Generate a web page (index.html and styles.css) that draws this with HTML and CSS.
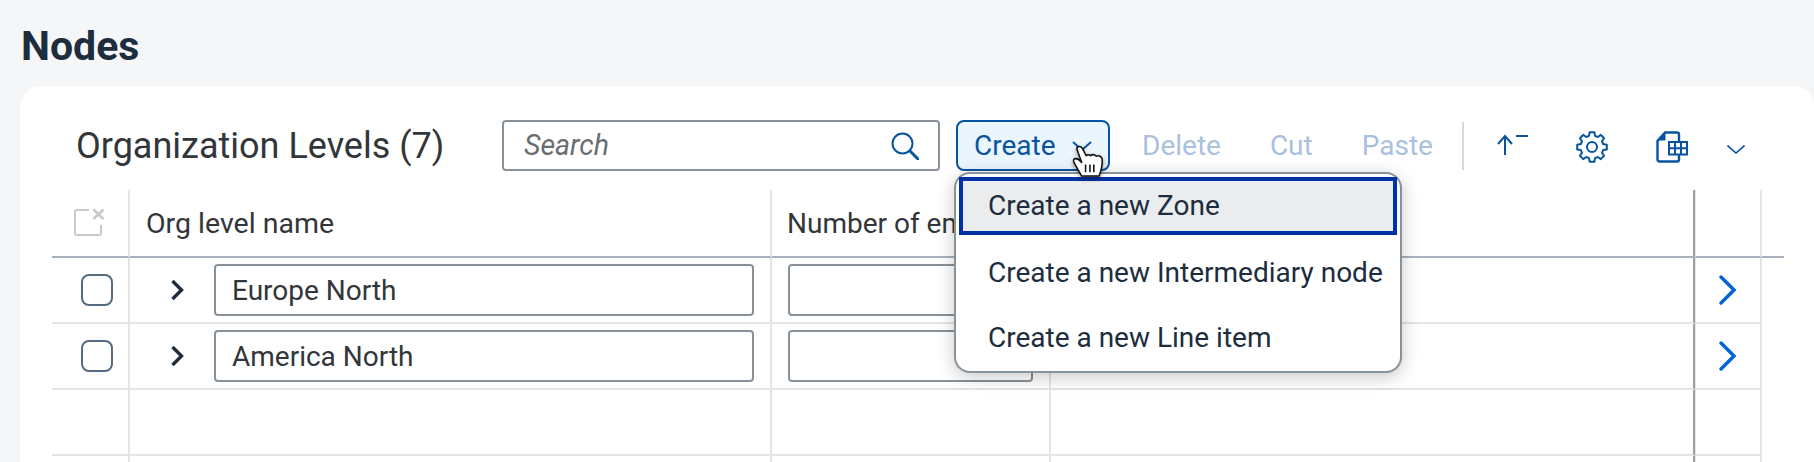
FILE: index.html
```html
<!DOCTYPE html>
<html lang="en">
<head>
    <meta charset="UTF-8">
    <meta name="viewport" content="width=device-width, initial-scale=1.0">
    <title>Nodes</title>
    <link rel="stylesheet" href="styles.css">
</head>
<body>
    <h1 class="page-title">Nodes</h1>
    <section class="card">
        <div class="toolbar">
            <h2 class="table-title">Organization Levels (7)</h2>
            <div class="search">
                <input type="text" class="search-input" placeholder="Search">
                <svg class="search-icon" width="28" height="28" viewBox="0 0 28 28" fill="none" stroke="#0854a0">
                    <circle cx="11.5" cy="11.5" r="10" stroke-width="2"/>
                    <path d="M19 19l8 8" stroke-width="3" stroke-linecap="round"/>
                </svg>
            </div>
            <div class="create-wrap">
                <button class="btn-create">
                    <span>Create</span>
                    <svg width="20" height="10" viewBox="0 0 20 10" fill="none" stroke="#0854a0" stroke-width="2"><path d="M1 1l9 8 9-8"/></svg>
                </button>
                <div class="menu">
                    <div class="menu-item menu-item-focus">Create a new Zone</div>
                    <div class="menu-item">Create a new Intermediary node</div>
                    <div class="menu-item">Create a new Line item</div>
                </div>
                <svg class="hand" width="32" height="34" viewBox="-1 -1 33 35">
                    <path d="M9 31L1 17Q-.5 13 3 13Q6 13 9 17L4 3Q4 .5 6.5 .5Q9 .5 10 3L13.5 10Q16 8 18 10Q21 7.5 24 10.5Q28 9 30 13Q31 20 27 31Z" fill="#fff" stroke="#111" stroke-width="1.6" stroke-linejoin="round"/>
                    <path d="M13 19v8M17.5 19v8M21.5 19v8" stroke="#111" stroke-width="1.6"/>
                </svg>
            </div>
            <button class="btn-flat">Delete</button>
            <button class="btn-flat">Cut</button>
            <button class="btn-flat">Paste</button>
            <span class="separator"></span>
            <svg class="icon-sort" width="32" height="24" viewBox="0 0 32 24" fill="none" stroke="#0854a0" stroke-width="2"><path d="M8 21V2M1 10l7-8 7 8M19 2h12"/></svg>
            <svg class="icon-gear" width="32" height="32" viewBox="0 0 32 32" fill="none" stroke="#0854a0" stroke-width="2" stroke-linejoin="round">
                <path d="M13 4.9L13.7 1.2H18.4L19 4.9L21.8 6L24.8 3.9L28.1 7.2L26 10.3L27.1 13L30.8 13.7V18.4L27.1 19L26 21.8L28.1 24.8L24.8 28.1L21.8 26L19 27.1L18.4 30.8H13.7L13 27.1L10.3 26L7.2 28.1L3.9 24.8L6 21.8L4.9 19L1.2 18.4V13.7L4.9 13L6 10.3L3.9 7.2L7.2 3.9L10.3 6Z"/>
                <circle cx="16" cy="16" r="5"/>
            </svg>
            <svg class="icon-table" width="32" height="32" viewBox="0 0 32 32" fill="none" stroke="#0854a0" stroke-width="2.4">
                <path d="M1.500 28.500V10L9 1.500H21Q23 1.500 23 3.500V10M23 24V28.500Q23 30.500 21 30.500H3.500Q1.500 30.500 1.500 28.500"/>
                <path d="M2 9L9 2V9Z" fill="#0854a0" stroke-width="1"/>
                <path d="M13 11H31V23.500H13ZM13 17.200H31M19 11V23.500M25 11V23.500" stroke-width="2"/>
            </svg>
            <svg class="icon-more" width="18" height="9" viewBox="0 0 18 9" fill="none" stroke="#0854a0" stroke-width="1.6"><path d="M.5 .5L9 8l8.500-7.500"/></svg>
        </div>

        <table class="levels">
            <colgroup>
                <col class="col-select">
                <col class="col-name">
                <col class="col-number">
                <col class="col-fill">
                <col class="col-nav">
                <col class="col-end">
            </colgroup>
            <thead>
                <tr>
                    <th class="cell-select">
                        <svg width="32" height="28" viewBox="0 0 32 28" fill="none" stroke="#c6cacd" stroke-width="2">
                            <path d="M15 2H3Q1 2 1 4V25Q1 27 3 27H25Q27 27 27 25V17"/>
                            <path d="M19.500 1.500l10 9.500M29.500 1.500l-10 9.500" stroke-width="2.600"/>
                        </svg>
                    </th>
                    <th class="cell-name">Org level name</th>
                    <th>Number of employees</th>
                    <th class="cell-fill"></th>
                    <th class="cell-nav"></th>
                    <th class="cell-end"></th>
                </tr>
            </thead>
            <tbody>
                <tr>
                    <td class="cell-select"><span class="checkbox"></span></td>
                    <td>
                        <div class="name-cell">
                            <svg width="14" height="22" viewBox="0 0 14 22" fill="none" stroke="#1d2d3e" stroke-width="3.400"><path d="M2.500 2l9 9-9 9"/></svg>
                            <input type="text" class="field field-name" value="Europe North">
                        </div>
                    </td>
                    <td><input type="text" class="field field-number"></td>
                    <td class="cell-fill"></td>
                    <td class="cell-nav"><svg width="18" height="30" viewBox="0 0 18 30" fill="none" stroke="#0064d9" stroke-width="3.400" stroke-linecap="round"><path d="M3 2l13 13L3 28"/></svg></td>
                    <td class="cell-end"></td>
                </tr>
                <tr>
                    <td class="cell-select"><span class="checkbox"></span></td>
                    <td>
                        <div class="name-cell">
                            <svg width="14" height="22" viewBox="0 0 14 22" fill="none" stroke="#1d2d3e" stroke-width="3.400"><path d="M2.500 2l9 9-9 9"/></svg>
                            <input type="text" class="field field-name" value="America North">
                        </div>
                    </td>
                    <td><input type="text" class="field field-number"></td>
                    <td class="cell-fill"></td>
                    <td class="cell-nav"><svg width="18" height="30" viewBox="0 0 18 30" fill="none" stroke="#0064d9" stroke-width="3.400" stroke-linecap="round"><path d="M3 2l13 13L3 28"/></svg></td>
                    <td class="cell-end"></td>
                </tr>
                <tr>
                    <td class="cell-select"></td><td></td><td></td><td class="cell-fill"></td><td class="cell-nav"></td><td class="cell-end"></td>
                </tr>
                <tr>
                    <td class="cell-select"></td><td></td><td></td><td class="cell-fill"></td><td class="cell-nav"></td><td class="cell-end"></td>
                </tr>
            </tbody>
        </table>
    </section>
</body>
</html>
```

FILE: styles.css
```css
html, body {
    height: 100%;
}

body {
    margin: 0;
    padding: 0;
    overflow: hidden;
    background-color: #f5f6f7;
    font-family: Roboto, "Noto Sans", sans-serif;
    color: #32363a;
}

.page-title {
    margin: 0;
    height: 86px;
    padding-left: 21px;
    font-size: 41px;
    line-height: 92px;
    font-weight: 700;
    color: #1d2d3e;
    box-sizing: border-box;
}

.card {
    margin-left: 20px;
    height: 376px;
    overflow: hidden;
    background-color: #fff;
    border-radius: 21px 21px 0 0;
}

.toolbar {
    display: flex;
    align-items: center;
    height: 51px;
    margin: 34px 0 19px;
    padding-left: 56px;
}

.table-title {
    flex: 0 0 426px;
    margin: 0;
    font-size: 36px;
    font-weight: 400;
}

.search {
    display: flex;
    align-items: center;
    width: 438px;
    height: 51px;
    box-sizing: border-box;
    border: 2px solid #89919a;
    border-radius: 4px;
    padding: 0 19px 0 20px;
}

.search-input {
    flex: 1;
    min-width: 0;
    border: none;
    outline: none;
    padding: 0;
    font-family: inherit;
    font-size: 28.500px;
    font-style: italic;
}

.search-input::placeholder {
    color: #6a6d70;
    opacity: 1;
}

.create-wrap {
    position: relative;
    margin-left: 16px;
}

.btn-create {
    display: flex;
    align-items: center;
    gap: 16px;
    width: 154px;
    height: 51px;
    box-sizing: border-box;
    padding: 0 0 0 16px;
    border: 2px solid #0854a0;
    border-radius: 8px;
    background-color: #ebf5fe;
    color: #0854a0;
    font-family: inherit;
    font-size: 28px;
}

.menu {
    position: absolute;
    top: 52px;
    left: -2px;
    width: 448px;
    height: 201px;
    box-sizing: border-box;
    padding: 3px;
    background-color: #fff;
    border: 2px solid #89919a;
    border-radius: 16px;
    box-shadow: 0 4px 18px rgba(0, 0, 0, 0.22);
}

.menu-item {
    display: flex;
    align-items: center;
    height: 65px;
    padding-left: 29px;
    font-size: 28px;
    color: #1d2d3e;
    white-space: nowrap;
}

.menu-item-focus {
    height: 58px;
    margin-bottom: 5px;
    padding-left: 25px;
    padding-bottom: 2px;
    box-sizing: border-box;
    border: 4px solid #0032a5;
    background-color: #eaecee;
}

.hand {
    position: absolute;
    left: 116px;
    top: 25px;
    filter: drop-shadow(0 2px 2px rgba(0, 0, 0, 0.4));
}

.btn-flat {
    margin-left: 32px;
    padding: 0;
    border: none;
    background: none;
    font-family: inherit;
    font-size: 28px;
    color: #a9c0df;
}

.btn-flat + .btn-flat {
    margin-left: 49px;
}

.separator {
    width: 2px;
    height: 48px;
    margin: 0 33px 0 29px;
    background-color: #d9d9d9;
}

.icon-gear {
    margin: 2px 0 0 47px;
}

.icon-table {
    margin: 2px 0 0 48px;
}

.icon-more {
    margin: 7px 0 0 39px;
}

.levels {
    margin-left: 32px;
    width: 1732px;
    table-layout: fixed;
    border-spacing: 0;
    font-size: 28px;
}

.col-select { width: 78px; }
.col-name { width: 642px; }
.col-number { width: 279px; }
.col-fill { width: 644px; }
.col-nav { width: 67px; }
.col-end { width: 22px; }

.levels th {
    height: 68px;
    padding: 0 0 0 15px;
    box-sizing: border-box;
    border-right: 2px solid #e5e5e5;
    border-bottom: 2px solid #a8b2bd;
    text-align: left;
    font-weight: 400;
    white-space: nowrap;
}

.levels td {
    height: 66px;
    padding: 0 0 0 16px;
    box-sizing: border-box;
    border-right: 2px solid #e5e5e5;
    border-bottom: 2px solid #e5e5e5;
}

.levels .cell-select {
    padding: 0 0 0 22px;
}

.levels th.cell-select {
    padding-top: 4px;
}

.levels td.cell-select {
    padding-left: 29px;
}

.levels th.cell-name {
    padding-left: 16px;
    font-size: 28.500px;
}

.levels .cell-fill {
    border-right: 2px solid #9ea1a3;
}

.levels td.cell-nav {
    padding: 0 0 0 22px;
    border-left: 1px solid #e5e5e5;
}

.levels th.cell-nav {
    border-left: 1px solid #e5e5e5;
}

.levels .cell-end {
    border-right: none;
}

.levels td.cell-end {
    border-bottom: none;
}

.cell-nav svg {
    display: block;
}

.checkbox {
    display: block;
    width: 32px;
    height: 32px;
    box-sizing: border-box;
    border: 2px solid #556b82;
    border-radius: 8px;
}

.name-cell {
    display: flex;
    align-items: center;
    gap: 30px;
    padding-left: 24px;
}

.field {
    display: block;
    height: 52px;
    box-sizing: border-box;
    padding: 0 16px;
    border: 2px solid #89919a;
    border-radius: 4px;
    font-family: inherit;
    font-size: 28px;
    color: #32363a;
    outline: none;
}

.field-name {
    width: 540px;
}

.field-number {
    width: 245px;
}
```
